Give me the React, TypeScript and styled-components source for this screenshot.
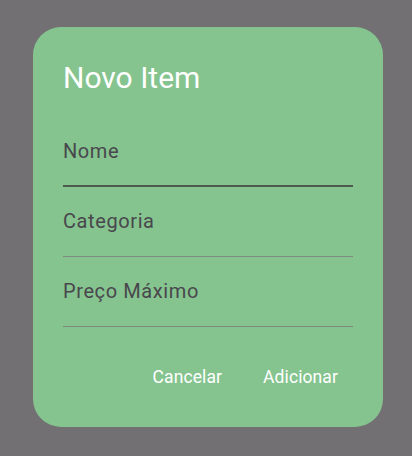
import styled, { createGlobalStyle } from "styled-components";

const GlobalStyle = createGlobalStyle`
  html, body {
    margin: 0;
    padding: 0;
    background: #737073;
    font-family: Roboto, "Noto Sans", sans-serif;
  }
`;

interface FieldProps {
  label: string;
  focused?: boolean;
}

function Field({ label, focused = false }: FieldProps) {
  return (
    <FieldBox>
      <Label>{label}</Label>
      <Underline $focused={focused} />
    </FieldBox>
  );
}

export default function App() {
  return (
    <>
      <GlobalStyle />
      <Backdrop>
        <Dialog>
          <Title>Novo Item</Title>
          <Fields>
            <Field label="Nome" focused />
            <Field label="Categoria" />
            <Field label="Preço Máximo" />
          </Fields>
          <Actions>
            <TextButton>Cancelar</TextButton>
            <TextButton>Adicionar</TextButton>
          </Actions>
        </Dialog>
      </Backdrop>
    </>
  );
}

const Backdrop = styled.div({
  height: "456px",
  padding: "27px 0 0 33px",
  boxSizing: "border-box",
});

const Dialog = styled.div({
  width: "350px",
  height: "400px",
  boxSizing: "border-box",
  padding: "33px 30px 0",
  borderRadius: "28px",
  background: "#85c48f",
  display: "flex",
  flexDirection: "column",
});

const Title = styled.h2({
  margin: 0,
  fontSize: "30px",
  lineHeight: "36px",
  fontWeight: 400,
  color: "#ffffff",
});

const Fields = styled.div({
  display: "flex",
  flexDirection: "column",
  gap: "22px",
  marginTop: "43px",
});

const FieldBox = styled.div({
  display: "flex",
  flexDirection: "column",
});

const Label = styled.span({
  fontSize: "20px",
  lineHeight: "24px",
  letterSpacing: "0.6px",
  color: "#49474d",
});

const Underline = styled.div<{ $focused: boolean }>(({ $focused }) => ({
  height: $focused ? "2px" : "1px",
  marginTop: $focused ? "22px" : "23px",
  background: $focused ? "#4b5b4e" : "#7f8a80",
}));

const Actions = styled.div({
  display: "flex",
  justifyContent: "flex-end",
  gap: "17px",
  marginTop: "30px",
  marginRight: "3px",
});

const TextButton = styled.button({
  border: "none",
  background: "transparent",
  padding: "10px 12px",
  fontFamily: "Roboto, sans-serif",
  fontSize: "17.5px",
  lineHeight: "20px",
  fontWeight: 400,
  letterSpacing: "0.1px",
  color: "#ffffff",
  cursor: "pointer",
});
